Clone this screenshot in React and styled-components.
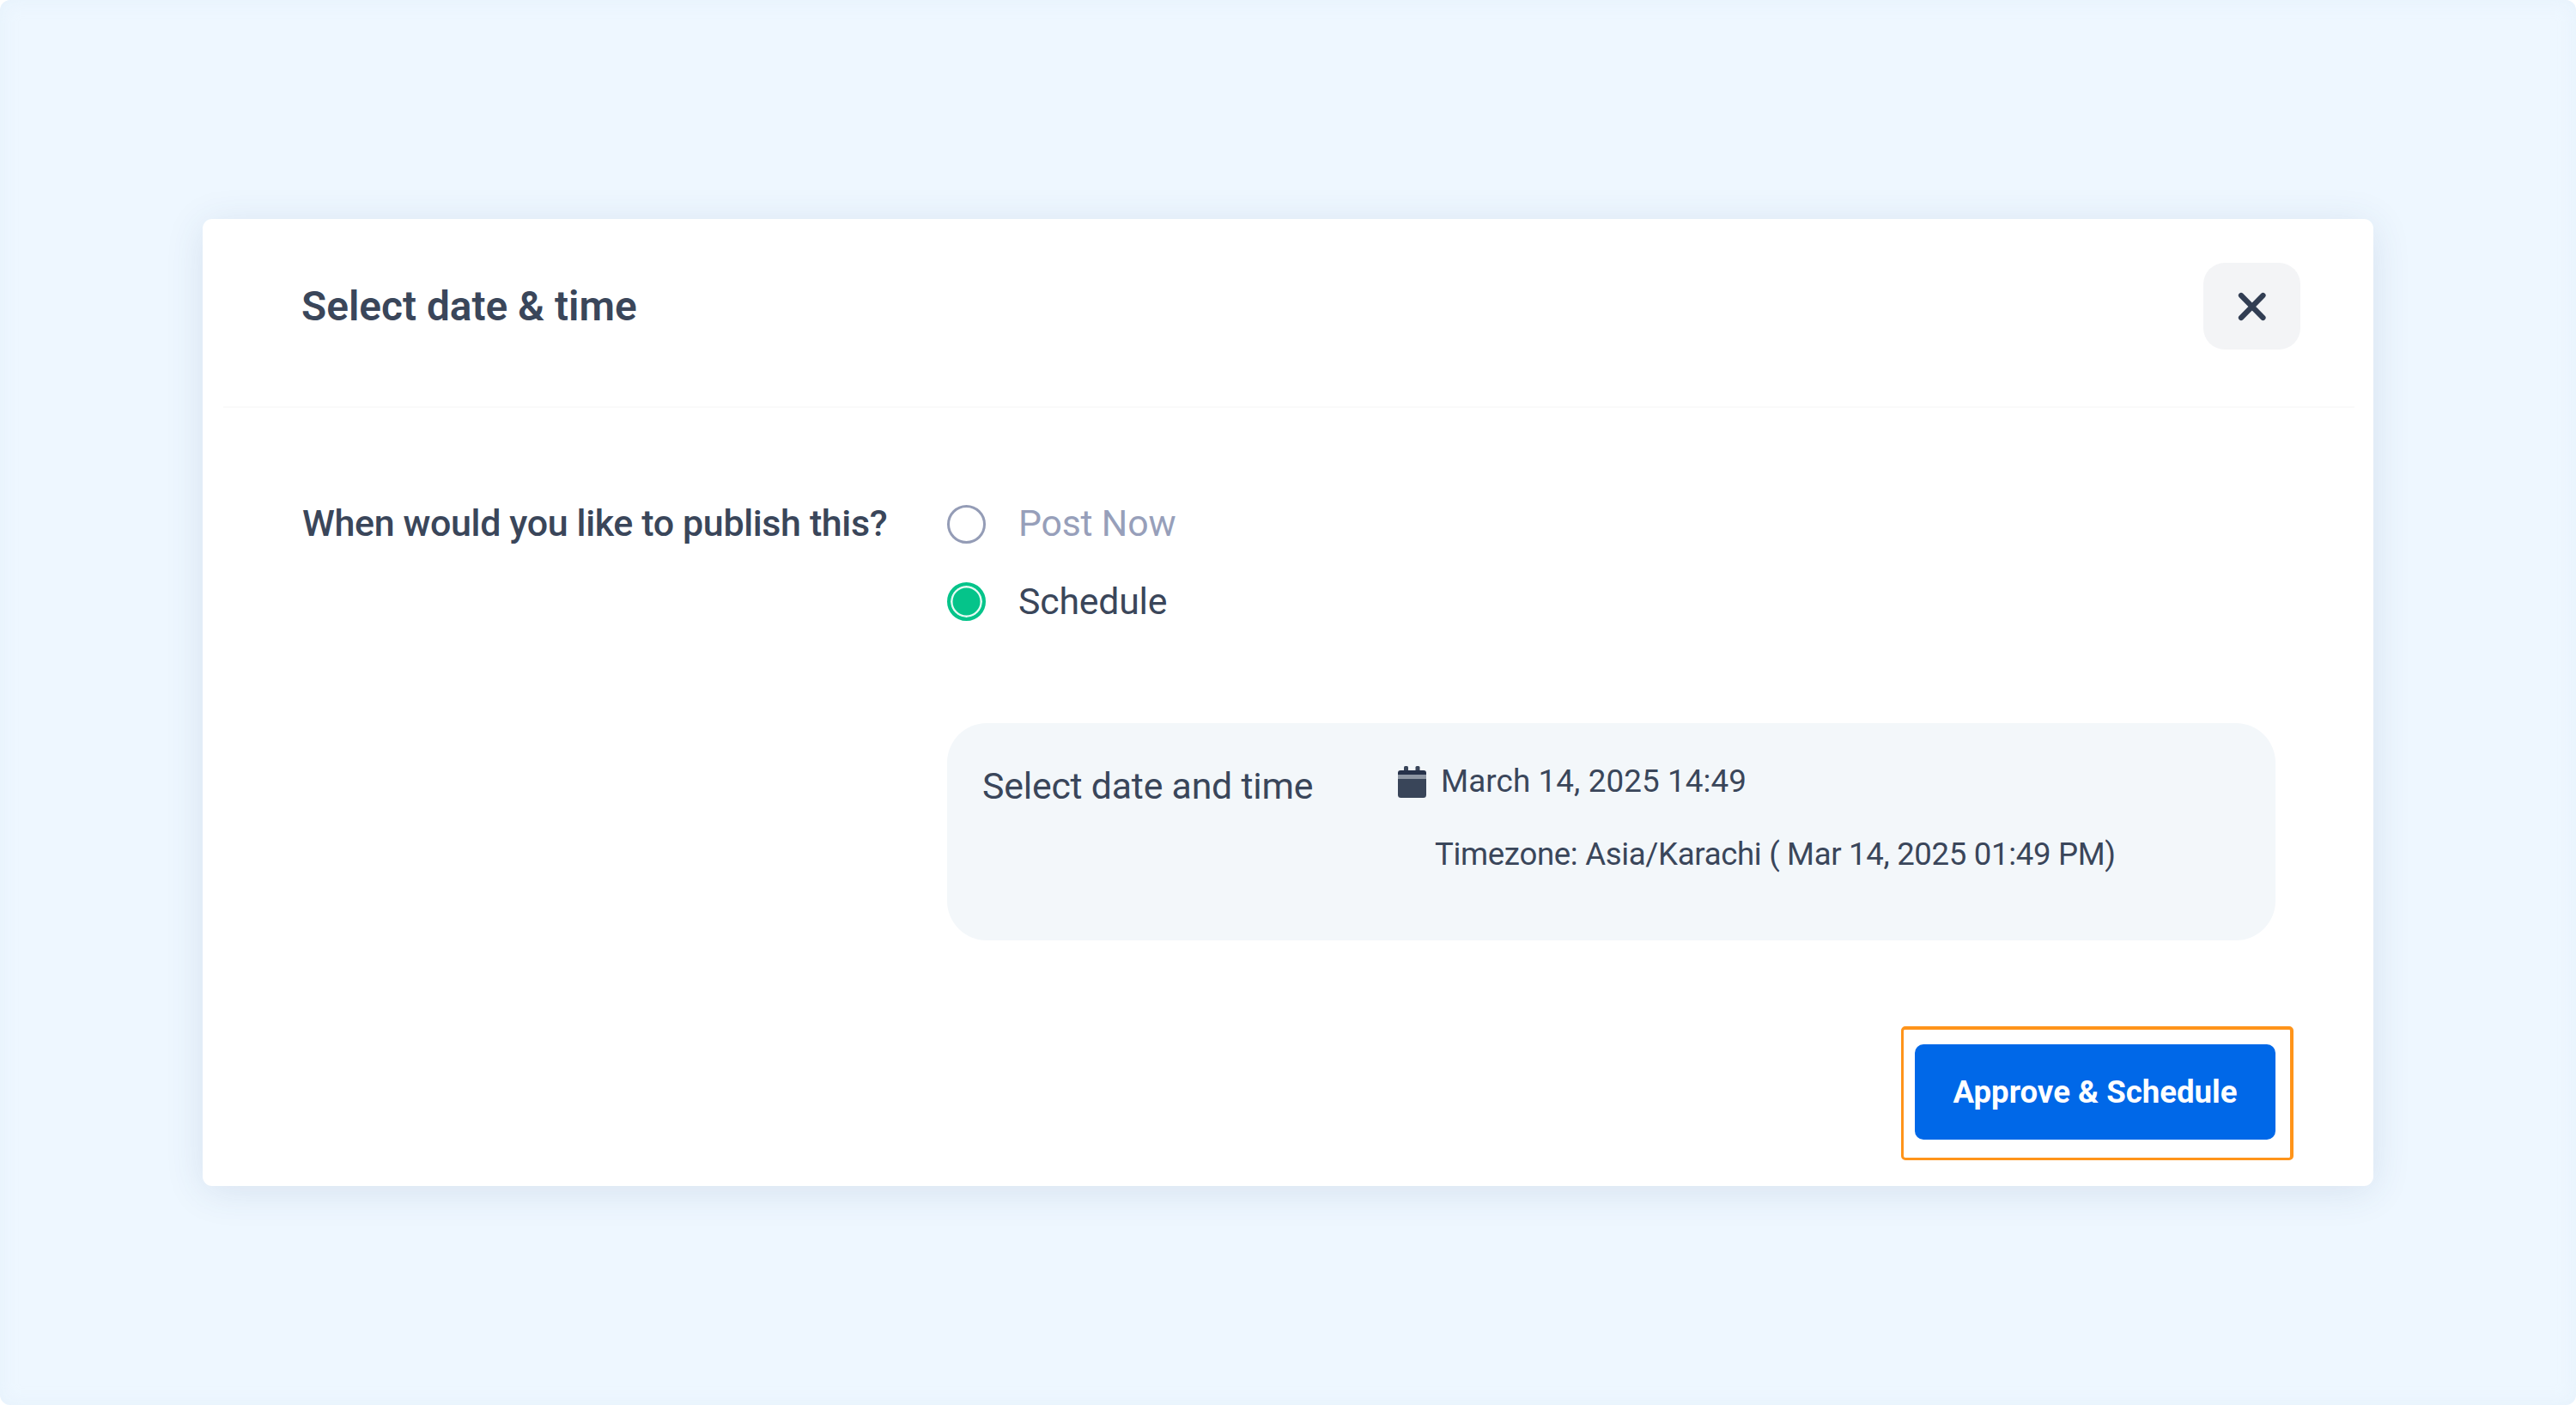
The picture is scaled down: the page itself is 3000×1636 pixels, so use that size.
import React, { useState } from 'react'
import styled, { createGlobalStyle } from 'styled-components'

const options = [
  { id: 'now', label: 'Post Now' },
  { id: 'schedule', label: 'Schedule' },
]

const CloseIcon = () => (
  <svg width="34" height="36" viewBox="0 0 34 36" fill="none">
    <path
      d="M4 5L29.5 31M29.5 5L4 31"
      stroke="#323e53"
      strokeWidth="6.2"
      strokeLinecap="round"
    />
  </svg>
)

const CalendarIcon = () => (
  <svg width="33" height="37" viewBox="0 0 33 37" fill="#394559">
    <rect x="7" y="0" width="5" height="8" rx="1.5" />
    <rect x="20.5" y="0" width="5" height="8" rx="1.5" />
    <path d="M0 10V8Q0 5 3 5H30Q33 5 33 8V10Z" fill="#26324a" />
    <rect x="0" y="10" width="33" height="5" fill="#8d96a3" />
    <path d="M0 15H33V33.5Q33 37 29.5 37H3.5Q0 37 0 33.5Z" />
  </svg>
)

const App = () => {
  const [selected, setSelected] = useState('schedule')
  return (
    <>
      <GlobalStyle />
      <Page>
        <Modal>
          <Header>
            <Title>Select date &amp; time</Title>
            <CloseButton aria-label="Close">
              <CloseIcon />
            </CloseButton>
          </Header>
          <Body>
            <Question>When would you like to publish this?</Question>
            <Options>
              {options.map(({ id, label }) => (
                <Option
                  key={id}
                  $active={selected === id}
                  onClick={() => setSelected(id)}
                >
                  <Radio $active={selected === id} />
                  {label}
                </Option>
              ))}
            </Options>
          </Body>
          <DateBox>
            <DateLabel>Select date and time</DateLabel>
            <DateInfo>
              <DateRow>
                <CalendarIcon />
                <DateValue>March 14, 2025 14:49</DateValue>
              </DateRow>
              <Timezone>Timezone: Asia/Karachi ( Mar 14, 2025 01:49 PM)</Timezone>
            </DateInfo>
          </DateBox>
          <Footer>
            <Highlight>
              <ApproveButton>Approve &amp; Schedule</ApproveButton>
            </Highlight>
          </Footer>
        </Modal>
      </Page>
    </>
  )
}

const GlobalStyle = createGlobalStyle`
  * {
    box-sizing: border-box;
    margin: 0;
    padding: 0;
  }
  body {
    background: #fff;
    color: #3a465a;
    font-family: Roboto, sans-serif;
  }
  button {
    border: none;
    cursor: pointer;
    font-family: inherit;
  }
  svg {
    display: block;
    flex-shrink: 0;
  }
`

const Page = styled.main`
  width: 3000px;
  height: 1636px;
  padding: 255px 236px;
  border-radius: 12px;
  background: #eef7ff;
  box-shadow: inset 0 0 20px rgba(215, 232, 243, 0.35);
`

const Modal = styled.section`
  display: flex;
  flex-direction: column;
  height: 1126px;
  border-radius: 11px;
  background: #fff;
  box-shadow: 0 6px 46px rgba(50, 75, 120, 0.12);
`

const Header = styled.header`
  display: flex;
  justify-content: space-between;
  align-items: flex-start;
  height: 220px;
  margin: 0 22px 0 24px;
  padding: 51px 63px 0 91px;
  border-bottom: 2px solid #fafafa;
`

const Title = styled.h1`
  font-size: 47.8px;
  font-weight: 600;
  line-height: 102px;
`

const CloseButton = styled.button`
  display: flex;
  justify-content: center;
  align-items: center;
  width: 113px;
  height: 101px;
  border-radius: 25px;
  background: #f3f4f6;
`

const Body = styled.div`
  display: grid;
  grid-template-columns: 751px 1fr;
  padding: 104px 0 0 116px;
`

const Question = styled.h2`
  font-size: 43px;
  font-weight: 500;
  letter-spacing: -0.38px;
  line-height: 60px;
`

const Options = styled.div`
  display: flex;
  flex-direction: column;
  gap: 31px;
`

const Option = styled.label`
  display: flex;
  align-items: center;
  gap: 38px;
  height: 60px;
  color: ${({ $active }) => ($active ? '#3a465a' : '#979fba')};
  font-size: 42.8px;
  letter-spacing: -0.2px;
  cursor: pointer;
`

const Radio = styled.span`
  width: 45px;
  height: 45px;
  margin-top: ${({ $active }) => ($active ? '0' : '3px')};
  border: ${({ $active }) => ($active ? '4px solid #05c48a' : '3px solid #949cb6')};
  border-radius: 50%;
  background: ${({ $active }) => ($active ? '#05c48a' : '#fff')};
  box-shadow: ${({ $active }) => ($active ? 'inset 0 0 0 2.5px #e4faf2' : 'none')};
`

const DateBox = styled.div`
  display: flex;
  height: 253px;
  margin: 112px 114px 0 867px;
  padding: 41px 42px 0 41px;
  border-radius: 46px;
  background: #f3f7fa;
`

const DateLabel = styled.span`
  width: 484px;
  font-size: 42.8px;
  letter-spacing: -0.2px;
  line-height: 64px;
`

const DateInfo = styled.div`
  display: flex;
  flex-direction: column;
  gap: 26px;
`

const DateRow = styled.div`
  display: flex;
  align-items: center;
  gap: 17px;
  height: 54px;
`

const DateValue = styled.span`
  font-size: 36.8px;
  letter-spacing: 0.1px;
  line-height: 56px;
`

const Timezone = styled.span`
  padding-left: 43px;
  font-size: 36.6px;
  letter-spacing: -0.33px;
  line-height: 64px;
  white-space: nowrap;
`

const Footer = styled.footer`
  display: flex;
  justify-content: flex-end;
  padding: 100px 93px 0 0;
`

const Highlight = styled.div`
  width: 457px;
  height: 156px;
  padding: 17px 17px 21px 13px;
  border: solid #ff941a;
  border-width: 4px 4px 3px 3px;
  border-radius: 5px;
`

const ApproveButton = styled.button`
  width: 420px;
  height: 111px;
  border-radius: 10px;
  background: #0068e8;
  color: #fff;
  font-size: 36.6px;
  font-weight: 700;
`

export default App
